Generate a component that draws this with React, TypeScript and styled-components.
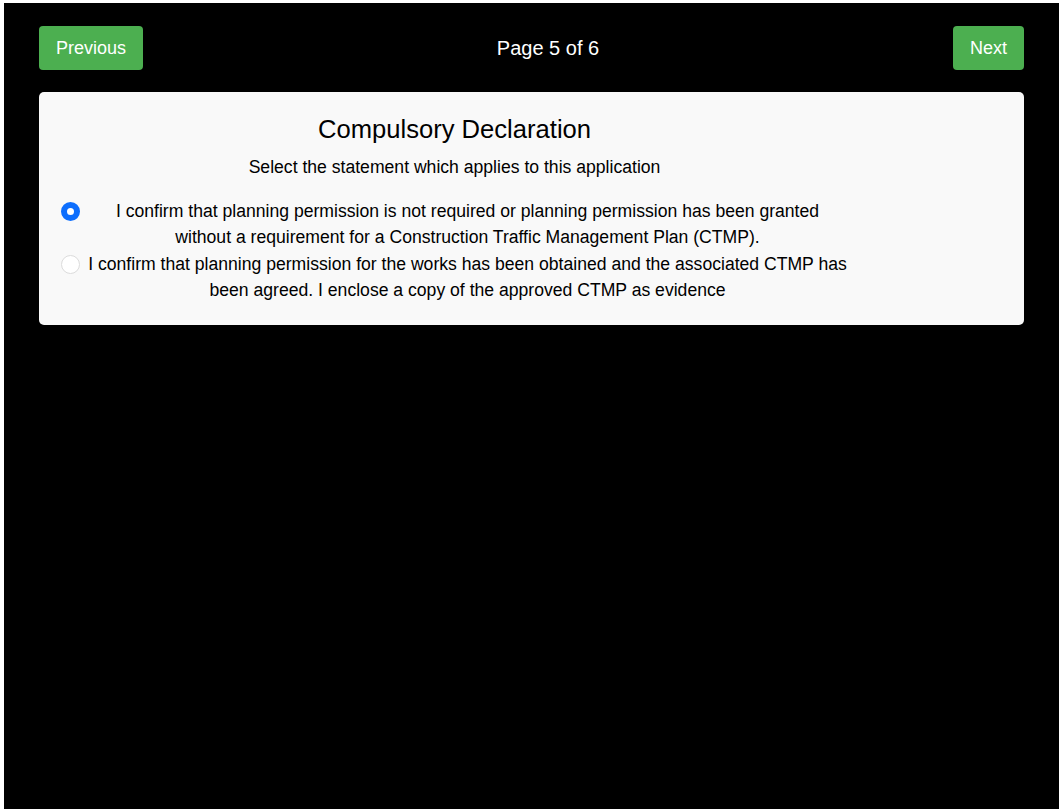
import * as React from "react";
import styled, { createGlobalStyle } from "styled-components";

const options = [
  {
    id: "no-ctmp",
    text:
      "I confirm that planning permission is not required or planning permission has been granted without a requirement for a Construction Traffic Management Plan (CTMP).",
  },
  {
    id: "ctmp-agreed",
    text:
      "I confirm that planning permission for the works has been obtained and the associated CTMP has been agreed. I enclose a copy of the approved CTMP as evidence",
  },
];

const App = () => {
  const [selected, setSelected] = React.useState("no-ctmp");

  return (
    <>
      <GlobalStyle />
      <Page>
        <Header>
          <NavButton type="button">Previous</NavButton>
          <PageLabel>Page 5 of 6</PageLabel>
          <NavButton type="button">Next</NavButton>
        </Header>
        <Card>
          <Content>
            <Title>Compulsory Declaration</Title>
            <Subtitle>Select the statement which applies to this application</Subtitle>
            {options.map((option) => (
              <Option key={option.id}>
                <Radio
                  type="radio"
                  name="declaration"
                  checked={selected === option.id}
                  onChange={() => setSelected(option.id)}
                />
                <OptionText>{option.text}</OptionText>
              </Option>
            ))}
          </Content>
        </Card>
      </Page>
    </>
  );
};

const GlobalStyle = createGlobalStyle`
  html, body {
    margin: 0;
    background: #ffffff;
    font-family: "Liberation Sans", Arial, sans-serif;
  }
`;

const Page = styled.div`
  box-sizing: border-box;
  margin: 3px 5px 0 4px;
  min-height: calc(100vh - 3px);
  padding: 23px 35px;
  background: #000000;
`;

const Header = styled.div`
  display: flex;
  align-items: center;
  justify-content: space-between;
  margin-bottom: 22px;
`;

const NavButton = styled.button`
  height: 44px;
  padding: 0 17px;
  border: none;
  border-radius: 4px;
  background: #4caf50;
  color: #ffffff;
  font-family: inherit;
  font-size: 18px;
  cursor: pointer;
`;

const PageLabel = styled.span`
  color: #ffffff;
  font-size: 20px;
`;

const Card = styled.div`
  padding: 23px 22px 22px;
  border-radius: 5px;
  background: #f9f9f9;
  color: #000000;
`;

const Content = styled.div`
  width: 787px;
`;

const Title = styled.h2`
  margin: 0 0 10px;
  font-size: 25.6px;
  font-weight: normal;
  line-height: 1.15;
  text-align: center;
`;

const Subtitle = styled.p`
  margin: 0 0 17px;
  font-size: 17.6px;
  line-height: 1.5;
  text-align: center;
`;

const Option = styled.label`
  display: flex;
  align-items: flex-start;
  gap: 7px;
  cursor: pointer;
`;

const Radio = styled.input`
  appearance: none;
  box-sizing: border-box;
  flex: none;
  width: 19px;
  height: 19px;
  margin: 4px 0 0;
  border: 1px solid #dcdcdc;
  border-radius: 50%;
  background: #ffffff;
  cursor: pointer;

  &:checked {
    border: 6px solid #0d6efd;
  }
`;

const OptionText = styled.span`
  width: 761px;
  font-size: 17.6px;
  line-height: 1.5;
  text-align: center;
`;

export default App;
